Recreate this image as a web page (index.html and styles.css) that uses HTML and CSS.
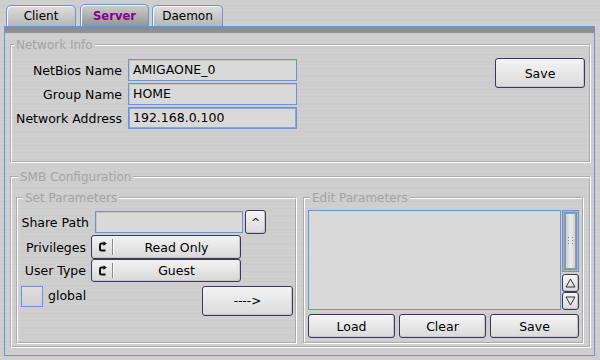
FILE: index.html
```html
<!DOCTYPE html>
<html lang="en">
<head>
  <meta charset="UTF-8" />
  <title>Samba Prefs</title>
  <link rel="stylesheet" href="styles.css">
</head>
<body>
  <div class="tabs">
    <div class="tab tab-client">Client</div>
    <div class="tab tab-server active">Server</div>
    <div class="tab tab-daemon">Daemon</div>
  </div>

  <div class="panel">
    <div class="panel-bar"></div>

    <fieldset class="group net">
      <legend>Network Info</legend>
      <div class="net-grid">
        <span class="lbl">NetBios Name</span>
        <div class="field">AMIGAONE_0</div>
        <button class="btn save-top">Save</button>
        <span class="lbl">Group Name</span>
        <div class="field">HOME</div>
        <span class="lbl">Network Address</span>
        <div class="field active">192.168.0.100</div>
      </div>
    </fieldset>

    <fieldset class="group smb">
      <legend>SMB Configuration</legend>
      <div class="smb-cols">
        <fieldset class="group sub set">
          <legend>Set Parameters</legend>
          <div class="row row-path">
            <span class="lbl lbl-path">Share Path</span>
            <div class="field path"></div>
            <button class="btn pop">^</button>
          </div>
          <div class="row row-priv">
            <span class="lbl lbl-cyc">Privileges</span>
            <div class="cycle">
              <span class="cyc-icon">
                <svg width="9" height="12" viewBox="0 0 9 12"><path d="M6 2.5H3.5Q2 2.5 2 4V8Q2 9.5 3.5 9.5H7.5" fill="none" stroke="#111" stroke-width="2"/><path d="M5.5 0.3L8.8 2.6L5.5 4.9Z" fill="#111"/></svg>
              </span>
              <span class="cyc-text">Read Only</span>
            </div>
          </div>
          <div class="row row-type">
            <span class="lbl lbl-cyc">User Type</span>
            <div class="cycle">
              <span class="cyc-icon">
                <svg width="9" height="12" viewBox="0 0 9 12"><path d="M6 2.5H3.5Q2 2.5 2 4V8Q2 9.5 3.5 9.5H7.5" fill="none" stroke="#111" stroke-width="2"/><path d="M5.5 0.3L8.8 2.6L5.5 4.9Z" fill="#111"/></svg>
              </span>
              <span class="cyc-text">Guest</span>
            </div>
          </div>
          <div class="row row-global">
            <span class="check"></span>
            <span class="lbl">global</span>
            <button class="btn arrow">----&gt;</button>
          </div>
        </fieldset>

        <fieldset class="group sub edit">
          <legend>Edit Parameters</legend>
          <div class="list-wrap">
            <div class="list"></div>
            <div class="scroller">
              <div class="track">
                <div class="knob">
                  <svg width="5" height="8" viewBox="0 0 5 8"><rect x="0" y="0" width="1" height="1" fill="#888"/><rect x="4" y="0" width="1" height="1" fill="#888"/><rect x="0" y="3" width="1" height="1" fill="#888"/><rect x="4" y="3" width="1" height="1" fill="#888"/><rect x="0" y="6" width="1" height="1" fill="#888"/><rect x="4" y="6" width="1" height="1" fill="#888"/></svg>
                </div>
              </div>
              <button class="btn arr"><svg width="11" height="10" viewBox="0 0 11 10"><path d="M5.5 1L10 9H1Z" fill="none" stroke="#333"/></svg></button>
              <button class="btn arr"><svg width="11" height="10" viewBox="0 0 11 10"><path d="M5.5 9L10 1H1Z" fill="none" stroke="#333"/></svg></button>
            </div>
          </div>
          <div class="btn-row">
            <button class="btn b-load">Load</button>
            <button class="btn b-clear">Clear</button>
            <button class="btn b-save">Save</button>
          </div>
        </fieldset>
      </div>
    </fieldset>
  </div>
</body>
</html>
```

FILE: styles.css
```css
body {
  margin: 0;
  width: 600px;
  height: 360px;
  overflow: hidden;
  font-family: "DejaVu Sans", sans-serif;
  font-size: 12.5px;
  color: #000;
  background-color: #cecece;
  background-image: repeating-linear-gradient(180deg,
    #d2d2d2 0px, #cbcbcb 1px, #d0d0d0 2px, #cdcdcd 3px,
    #d3d3d3 4px, #cacaca 5px, #cfcfcf 7px);
}

/* tabs */
.tabs {
  display: flex;
  align-items: flex-end;
  height: 26px;
  padding-left: 6px;
  box-sizing: border-box;
}

.tab {
  height: 21px;
  box-sizing: border-box;
  border: 1px solid #6b93d6;
  border-bottom: none;
  border-radius: 5px 5px 0 0;
  background: linear-gradient(#dedede, #b6b6b6);
  box-shadow: inset 1px 1px 0 #f6f6f6;
  font-size: 12px;
  display: flex;
  align-items: center;
  justify-content: center;
}

.tab-client { width: 70px; }
.tab-server { width: 69px; margin-left: 4px; }
.tab-daemon { width: 71px; margin-left: 3px; }

.tab.active {
  height: 22px;
  color: #86008a;
  font-weight: bold;
  font-size: 11.6px;
  background: linear-gradient(#cdcdcd, #959595);
}

/* main panel */
.panel {
  margin-left: 4px;
  width: 591px;
  height: 330px;
  box-sizing: border-box;
  border: 1px solid #6b93d6;
}

.panel-bar {
  height: 6px;
  background: linear-gradient(#8a8a8a, #929292);
}

.group {
  margin: 0;
  padding: 0;
  min-width: 0;
  border: 2px groove #ffffff;
}

.group legend {
  margin-left: 2px;
  padding: 0 2px;
  font-size: 12px;
  line-height: 14px;
  color: #a4a4a4;
}

.lbl {
  white-space: nowrap;
}

.field {
  height: 22px;
  box-sizing: border-box;
  border: 1px solid #6b93d6;
  background: #d9d9d9;
  box-shadow: inset 1px 1px 0 #c4c4c4;
  padding-left: 4px;
  line-height: 20px;
}

.field.active {
  box-shadow: inset 0 0 0 1px #86a8e0;
}

.btn {
  box-sizing: border-box;
  margin: 0;
  padding: 0;
  font-family: inherit;
  font-size: 12.5px;
  color: #000;
  border: 1px solid #3a3a58;
  border-radius: 3px;
  background: linear-gradient(#f4f4f4, #dadada);
  box-shadow: inset -1px -1px 0 #c6c6c6;
}

/* network info */
.group.net {
  margin: 5px 3px 0 5px;
  padding: 7px 4px 32px 0;
}

.net-grid {
  display: grid;
  grid-template-columns: 110px 169px 1fr 90px;
  grid-auto-rows: 22px;
  column-gap: 6px;
  row-gap: 2px;
  align-items: center;
}

.net-grid .lbl {
  grid-column: 1;
  justify-self: end;
}

.net-grid .field {
  grid-column: 2;
}

.save-top {
  grid-column: 4;
  grid-row: 1 / span 2;
  align-self: start;
  margin-top: -1px;
  height: 30px;
}

/* smb configuration */
.group.smb {
  margin: 7px 3px 0 5px;
  padding: 7px 5px 2px 4px;
}

.smb-cols {
  display: flex;
  gap: 6px;
}

.group.sub {
  width: 281px;
  height: 153px;
  box-sizing: border-box;
}

.group.set {
  padding: 5px 2px 0 3px;
}

.row {
  display: flex;
  align-items: center;
}

.row-path { height: 24px; }
.row-priv { height: 24px; margin-top: 1px; }
.row-type { height: 23px; }
.row-global { height: 30px; margin-top: 4px; align-items: flex-start; }

.lbl-path {
  width: 68px;
  margin-right: 6px;
  text-align: right;
}

.lbl-cyc {
  width: 65px;
  margin-right: 5px;
  text-align: right;
}

.field.path {
  width: 148px;
}

.pop {
  width: 21px;
  height: 24px;
  margin-left: 2px;
  font-size: 11px;
}

.cycle {
  width: 150px;
  height: 100%;
  box-sizing: border-box;
  border: 1px solid #3a3a58;
  border-radius: 3px;
  background: linear-gradient(#f2f2f2, #d8d8d8);
  box-shadow: inset -1px -1px 0 #c6c6c6;
  display: flex;
  align-items: stretch;
}

.cyc-icon {
  width: 20px;
  display: flex;
  align-items: center;
  justify-content: center;
  border-right: 1px solid #8a8a8a;
  margin: 3px 0;
  box-shadow: 1px 0 0 #fafafa;
}

.cyc-text {
  flex: 1;
  display: flex;
  align-items: center;
  justify-content: center;
}

.check {
  width: 22px;
  height: 21px;
  box-sizing: border-box;
  border: 1px solid #6b93d6;
  background: linear-gradient(#e0e0e0, #cfcfcf);
  margin-right: 5px;
}

.row-global .lbl {
  line-height: 20px;
}

.arrow {
  width: 91px;
  height: 30px;
  margin-left: auto;
  font-size: 12px;
}

/* edit parameters */
.group.edit {
  padding: 5px 3px 0 3px;
}

.list-wrap {
  display: flex;
  gap: 1px;
  height: 100px;
}

.list {
  width: 253px;
  box-sizing: border-box;
  border: 1px solid #6b93d6;
  background: #d9d9d9;
}

.scroller {
  width: 17px;
  display: flex;
  flex-direction: column;
}

.track {
  height: 62px;
  box-sizing: border-box;
  border: 1px solid #6b93d6;
  background: #b4b4b4;
  padding: 1px;
  margin-bottom: 2px;
}

.knob {
  height: 100%;
  box-sizing: border-box;
  border: 1px solid #6b93d6;
  box-shadow: inset 0 0 0 1px #9a9a9a;
  background: linear-gradient(90deg, #c8c8c8, #ececec 50%, #cacaca);
  display: flex;
  align-items: center;
  justify-content: center;
}

.arr {
  height: 18px;
  display: flex;
  align-items: center;
  justify-content: center;
}

.btn-row {
  display: flex;
  margin-top: 4px;
  height: 24px;
}

.b-load { width: 87px; }
.b-clear { width: 87px; margin-left: 4px; }
.b-save { width: 89px; margin-left: 4px; }
```
